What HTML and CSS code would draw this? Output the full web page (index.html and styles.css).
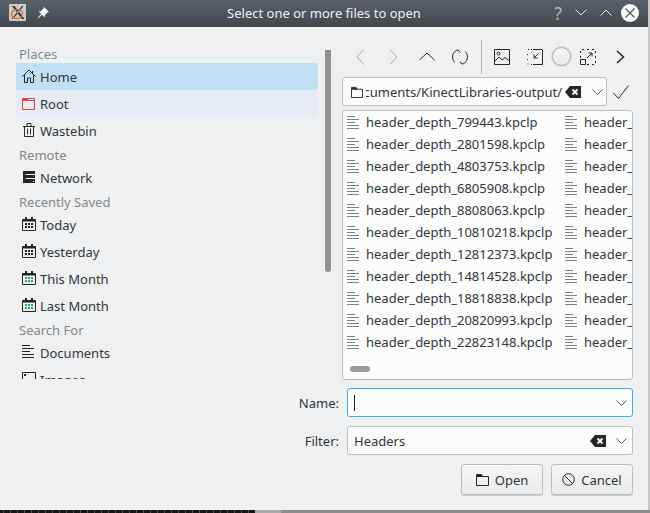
FILE: index.html
```html
<!DOCTYPE html>
<html>
<head>
    <title>Select one or more files to open</title>
    <link rel="stylesheet" href="styles.css">
</head>
<body>
    <svg class="sprites" width="0" height="0">
        <symbol id="doc" viewBox="0 0 13 13">
            <path d="M0 .5h8M0 3.500h12M0 6.500h8M0 9.500h12M0 12.500h12" fill="none" stroke="currentColor"/>
        </symbol>
        <symbol id="cal" viewBox="0 0 14 14">
            <path d="M.5 2.500h13v11H.5z" fill="none" stroke="#232629"/>
            <path d="M1 2h12v2.500H1zM3 0h2v2H3zM9 0h2v2H9z" fill="#232629"/>
        </symbol>
        <symbol id="folder" viewBox="0 0 13 13">
            <path d="M.5 1.500h5l1 2h6v9H.5z" fill="none" stroke="#232629"/>
            <path d="M1 2h5l1 2H1z" fill="#232629"/>
        </symbol>
        <symbol id="clear" viewBox="0 0 16 12">
            <path d="M5 0h11v12H5L0 6z" fill="#232629"/>
            <path d="M7.500 3.500l5 5M12.500 3.500l-5 5" stroke="#fcfcfc" stroke-width="2"/>
        </symbol>
        <symbol id="chevron" viewBox="0 0 11 6">
            <path d="M.5.500l5 5 5-5" fill="none" stroke="#4d5256"/>
        </symbol>
    </svg>

    <div class="window">
        <div class="titlebar">
            <div class="title-left">
                <svg class="x-logo" viewBox="0 0 17 17" width="17" height="17">
                    <rect width="17" height="17" rx="1" fill="#c9cbcc"/>
                    <path d="M3 2l10 13h2.500L5.500 2zM13 2h1.500L4 15H2.500z" fill="#2d3034"/>
                    <ellipse cx="8" cy="10" rx="5.500" ry="4.500" fill="none" stroke="#e2712c" stroke-width="1.400"/>
                </svg>
                <svg class="pin" viewBox="0 0 12 12" width="12" height="12">
                    <path d="M7 0l5 5-1.500.6-2.500 2.400-.4 2.300L5 7.800 1 11.500l-.5-.5L4.200 7 1.700 4.500 4 4.100l2.400-2.500z" fill="#fcfcfc"/>
                </svg>
            </div>
            <div class="title-text">Select one or more files to open</div>
            <div class="title-right">
                <span class="help">?</span>
                <svg viewBox="0 0 12 7" width="12" height="7"><path d="M.5.500L6 6l5.500-5.500" fill="none" stroke="#e3e5e6"/></svg>
                <svg viewBox="0 0 12 7" width="12" height="7"><path d="M.5 6.500L6 1l5.500 5.500" fill="none" stroke="#e3e5e6"/></svg>
                <svg class="close" viewBox="0 0 18 18" width="18" height="18">
                    <circle cx="9" cy="9" r="9" fill="#fcfcfc"/>
                    <path d="M4.500 4.500l9 9M13.500 4.500l-9 9" stroke="#555c63" stroke-width="1.300"/>
                </svg>
            </div>
        </div>

        <div class="content">
            <div class="top">
                <div class="places">
                    <div class="group">Places</div>
                    <div class="place selected">
                        <svg viewBox="0 0 14 14"><path d="M7 1L.5 7.500M7 1l6.500 6.500M2.500 6v7.500h3V9h3v4.500h3V6M10.500 2v2.500" fill="none" stroke="#232629"/></svg>
                        Home
                    </div>
                    <div class="place hover">
                        <svg viewBox="0 0 14 14"><path d="M.5 2.500h12v11H.5z" fill="none" stroke="#da4453"/><path d="M1 2h5v2h6.500v1H1z" fill="#da4453"/></svg>
                        Root
                    </div>
                    <div class="place">
                        <svg viewBox="0 0 14 14"><path d="M2.500 3.500v10h9v-10M1 3.500h12M5 3V.5h4V3M5.500 5.500v6M8.500 5.500v6" fill="none" stroke="#232629"/></svg>
                        Wastebin
                    </div>
                    <div class="group">Remote</div>
                    <div class="place">
                        <svg viewBox="0 0 14 14"><path d="M1 1h12v12H1z" fill="#232629"/><path d="M3.500 4.500H13M3.500 8.500H13" stroke="#eff0f1"/><path d="M11 11h1v1h-1z" fill="#eff0f1"/></svg>
                        Network
                    </div>
                    <div class="group">Recently Saved</div>
                    <div class="place">
                        <svg viewBox="0 0 14 14"><use href="#cal"/><path d="M3 6h8v2H3zM3 9h8v2H3z" fill="#232629"/><path d="M5.500 6v5M8.500 6v5" stroke="#eff0f1"/></svg>
                        Today
                    </div>
                    <div class="place">
                        <svg viewBox="0 0 14 14"><use href="#cal"/><path d="M3 6h8v2H3zM3 9h8v2H3z" fill="#232629"/><path d="M5.500 6v5M8.500 6v5" stroke="#eff0f1"/></svg>
                        Yesterday
                    </div>
                    <div class="place">
                        <svg viewBox="0 0 14 14"><use href="#cal"/><path d="M3 6h8v2H3zM3 9h8v2H3z" fill="#27ae60"/><path d="M5.500 6v5M8.500 6v5" stroke="#eff0f1"/></svg>
                        This Month
                    </div>
                    <div class="place">
                        <svg viewBox="0 0 14 14"><use href="#cal"/><path d="M3 6h8v2H3zM3 9h8v2H3z" fill="#27ae60"/><path d="M5.500 6v5M8.500 6v5" stroke="#eff0f1"/></svg>
                        Last Month
                    </div>
                    <div class="group">Search For</div>
                    <div class="place">
                        <svg class="ink"><use href="#doc"/></svg>
                        Documents
                    </div>
                    <div class="place">
                        <svg viewBox="0 0 14 14"><path d="M.5.500h13v13H.5z" fill="none" stroke="#232629"/><path d="M2 2h2v2H2z" fill="#232629"/></svg>
                        Images
                    </div>
                </div>

                <div class="splitter"><div class="splitter-thumb"></div></div>

                <div class="browser">
                    <div class="toolbar">
                        <button class="tool"><svg viewBox="0 0 9 16" width="9" height="16"><path d="M8 .5L1 8l7 7.500" fill="none" stroke="#a3a6a8"/></svg></button>
                        <button class="tool"><svg viewBox="0 0 9 16" width="9" height="16"><path d="M1 .5L8 8l-7 7.500" fill="none" stroke="#a3a6a8"/></svg></button>
                        <button class="tool"><svg viewBox="0 0 16 9" width="16" height="9"><path d="M.5 8L8 1l7.500 7" fill="none" stroke="#232629"/></svg></button>
                        <button class="tool"><svg viewBox="0 0 16 16" width="16" height="16"><path d="M6 .8A7.500 7.500 0 0 0 2.700 13.300M10 15.200A7.500 7.500 0 0 0 13.300 2.700M6 .8L8 3.500M10 15.200L8 12.500" fill="none" stroke="#232629"/></svg></button>
                        <div class="tool-sep"></div>
                        <button class="tool"><svg viewBox="0 0 16 16" width="16" height="16"><path d="M.5.500h15v15H.5z" fill="none" stroke="#232629"/><circle cx="4.500" cy="4.500" r="1.500" fill="none" stroke="#232629"/><path d="M1 12l4-4 3 3 3-2.500 4 3" fill="none" stroke="#232629"/></svg></button>
                        <button class="tool"><svg viewBox="0 0 16 16" width="16" height="16"><path d="M6 .5h9.500V15.500H6M1 .5h1M.5 5v1M.5 10v1M.5 15h1M4 15.500h1M4 .5h1" fill="none" stroke="#232629"/><path d="M11.500 4.500L7 9M7 5.500V9h3.500" fill="none" stroke="#232629"/></svg></button>
                        <div class="tool-circle"></div>
                        <button class="tool"><svg viewBox="0 0 16 16" width="16" height="16"><path d="M.5 9V.5H15.500V15.500H6" fill="none" stroke="#232629" stroke-dasharray="2 3"/><path d="M.5 10.500h5v5h-5z" fill="#eff0f1" stroke="#232629"/><path d="M7 9l5-5M8.500 4H12v3.500" fill="none" stroke="#232629"/></svg></button>
                        <button class="tool"><svg viewBox="0 0 9 14" width="9" height="14"><path d="M1 1l6.500 6L1 13" fill="none" stroke="#232629" stroke-width="1.500"/></svg></button>
                    </div>

                    <div class="path-row">
                        <div class="path-box">
                            <svg class="folder-icon"><use href="#folder"/></svg>
                            <span class="path-text"><span>/home/user/Documents/KinectLibraries-output/</span></span>
                            <svg class="clear-icon"><use href="#clear"/></svg>
                            <svg class="chevron"><use href="#chevron"/></svg>
                        </div>
                        <svg class="accept" viewBox="0 0 16 14" width="16" height="14"><path d="M.5 8l5 5.500L15.500.5" fill="none" stroke="#232629"/></svg>
                    </div>

                    <div class="files">
                        <div class="file-grid">
                            <div class="file"><svg><use href="#doc"/></svg>header_depth_799443.kpclp</div>
                            <div class="file"><svg><use href="#doc"/></svg>header_depth_24825303.kpclp</div>
                            <div class="file"><svg><use href="#doc"/></svg>header_depth_2801598.kpclp</div>
                            <div class="file"><svg><use href="#doc"/></svg>header_depth_26827458.kpclp</div>
                            <div class="file"><svg><use href="#doc"/></svg>header_depth_4803753.kpclp</div>
                            <div class="file"><svg><use href="#doc"/></svg>header_depth_28829613.kpclp</div>
                            <div class="file"><svg><use href="#doc"/></svg>header_depth_6805908.kpclp</div>
                            <div class="file"><svg><use href="#doc"/></svg>header_depth_30831768.kpclp</div>
                            <div class="file"><svg><use href="#doc"/></svg>header_depth_8808063.kpclp</div>
                            <div class="file"><svg><use href="#doc"/></svg>header_depth_32833923.kpclp</div>
                            <div class="file"><svg><use href="#doc"/></svg>header_depth_10810218.kpclp</div>
                            <div class="file"><svg><use href="#doc"/></svg>header_depth_34836078.kpclp</div>
                            <div class="file"><svg><use href="#doc"/></svg>header_depth_12812373.kpclp</div>
                            <div class="file"><svg><use href="#doc"/></svg>header_depth_36838233.kpclp</div>
                            <div class="file"><svg><use href="#doc"/></svg>header_depth_14814528.kpclp</div>
                            <div class="file"><svg><use href="#doc"/></svg>header_depth_38840388.kpclp</div>
                            <div class="file"><svg><use href="#doc"/></svg>header_depth_18818838.kpclp</div>
                            <div class="file"><svg><use href="#doc"/></svg>header_depth_40842543.kpclp</div>
                            <div class="file"><svg><use href="#doc"/></svg>header_depth_20820993.kpclp</div>
                            <div class="file"><svg><use href="#doc"/></svg>header_depth_42844698.kpclp</div>
                            <div class="file"><svg><use href="#doc"/></svg>header_depth_22823148.kpclp</div>
                            <div class="file"><svg><use href="#doc"/></svg>header_depth_44846853.kpclp</div>
                        </div>
                        <div class="hscroll"></div>
                    </div>
                </div>
            </div>

            <div class="form-row name-row">
                <label>Name:</label>
                <div class="field focused">
                    <span class="caret"></span>
                    <svg class="chevron"><use href="#chevron"/></svg>
                </div>
            </div>
            <div class="form-row filter-row">
                <label>Filter:</label>
                <div class="field">
                    <span class="field-text">Headers</span>
                    <svg class="clear-icon"><use href="#clear"/></svg>
                    <svg class="chevron"><use href="#chevron"/></svg>
                </div>
            </div>

            <div class="buttons">
                <button class="btn">
                    <svg><use href="#folder"/></svg>
                    Open
                </button>
                <button class="btn">
                    <svg viewBox="0 0 13 13"><circle cx="6.500" cy="6.500" r="5.800" fill="none" stroke="#232629"/><path d="M2.500 2.500l8 8" stroke="#232629"/></svg>
                    Cancel
                </button>
            </div>
        </div>
    </div>

    <div class="under">
        <div class="under-text"></div>
    </div>
</body>
</html>
```

FILE: styles.css
```css
* {
    box-sizing: border-box;
}

html, body {
    margin: 0;
    padding: 0;
    height: 513px;
    overflow: hidden;
}

body {
    background: #c4c6c8;
    font-family: "Noto Sans", sans-serif;
    font-size: 13px;
    color: #31363b;
}

.sprites {
    display: block;
    height: 0;
}

.window {
    width: 648px;
    height: 510px;
    background: #eff0f1;
}

/* title bar */
.titlebar {
    height: 27px;
    display: flex;
    align-items: center;
    justify-content: space-between;
    background: linear-gradient(#59626a, #40474d);
    color: #eff0f1;
    padding: 0 9px 2px 9px;
}

.title-left {
    display: flex;
    align-items: center;
    gap: 11px;
    width: 114px;
}

.title-text {
    flex: 1;
    text-align: center;
}

.title-right {
    width: 114px;
    display: flex;
    align-items: center;
    justify-content: flex-end;
    gap: 13px;
}

.help {
    font-size: 18px;
    color: #aeb2b5;
    line-height: 20px;
}

.close {
    margin-left: -4px;
}

/* main */
.content {
    height: 483px;
    padding: 15px 15px 0 16px;
}

.top {
    display: flex;
    height: 338px;
}

.places {
    width: 302px;
    height: 337px;
    padding-top: 1px;
    overflow: hidden;
    flex: none;
}

.group {
    height: 20px;
    line-height: 22px;
    padding-left: 3px;
    color: #84888b;
}

.place {
    height: 27px;
    display: flex;
    align-items: center;
    gap: 4px;
    padding-left: 6px;
}

.place svg {
    width: 14px;
    height: 14px;
    flex: none;
    margin-top: -2px;
}

.place .ink {
    width: 13px;
    height: 13px;
    margin-right: 1px;
    color: #232629;
}

.selected {
    background: #c2e0f5;
}

.hover {
    background: #e6ecf3;
}

.splitter {
    width: 6px;
    margin-left: 7px;
    flex: none;
}

.splitter-thumb {
    height: 222px;
    margin-top: 8px;
    background: #8f9193;
    border-radius: 0 0 3px 3px;
}

/* right side */
.browser {
    width: 291px;
    margin-left: 11px;
    flex: none;
}

.toolbar {
    display: flex;
    align-items: center;
    height: 35px;
    margin-top: -3px;
    padding-left: 2px;
}

.tool {
    width: 33px;
    height: 33px;
    padding: 0;
    background: none;
    border: none;
    display: flex;
    align-items: center;
    justify-content: center;
    flex: none;
}

.tool-sep {
    width: 1px;
    height: 34px;
    background: #b6b8ba;
    margin: 0 3px 0 5px;
    flex: none;
}

.tool-circle {
    width: 19px;
    height: 19px;
    border-radius: 50%;
    border: 1px solid #a9abad;
    background: linear-gradient(#f6f7f7, #e6e7e8);
    flex: none;
    margin-left: 1px;
    box-shadow: 0 0 0 1px #d8dadb;
}

.path-row {
    display: flex;
    align-items: center;
    margin-top: 3px;
    height: 29px;
}

.path-box {
    width: 265px;
    height: 29px;
    background: #fcfcfc;
    border: 1px solid #bcbebf;
    border-radius: 3px;
    display: flex;
    align-items: center;
    padding-left: 8px;
}

.folder-icon {
    width: 12px;
    height: 12px;
    flex: none;
}

.path-text {
    width: 196px;
    margin-left: 3px;
    overflow: hidden;
    white-space: nowrap;
    display: flex;
    justify-content: flex-end;
    flex: none;
}

.path-text span {
    flex: none;
}

.clear-icon {
    width: 16px;
    height: 12px;
    flex: none;
}

.path-box .clear-icon {
    margin-left: 3px;
}

.chevron {
    width: 11px;
    height: 6px;
    flex: none;
}

.path-box .chevron {
    margin-left: 11px;
}

.accept {
    margin-left: 6px;
}

.files {
    position: relative;
    height: 270px;
    margin-top: 4px;
    background: #fcfcfc;
    border: 1px solid #bcbebf;
    border-radius: 3px;
    overflow: hidden;
}

.file-grid {
    display: grid;
    grid-template-columns: repeat(2, 218px);
    grid-auto-rows: 22px;
    padding-left: 4px;
}

.file {
    display: flex;
    align-items: center;
    gap: 6px;
    white-space: nowrap;
}

.file svg {
    width: 13px;
    height: 13px;
    flex: none;
    color: #7a8087;
}

.hscroll {
    position: absolute;
    left: 7px;
    top: 255px;
    width: 20px;
    height: 6px;
    border-radius: 3px;
    background: #999b9d;
}

/* name and filter */
.form-row {
    display: flex;
    align-items: center;
}

.form-row label {
    width: 331px;
    text-align: right;
    padding-right: 8px;
}

.name-row {
    margin-top: 8px;
}

.filter-row {
    margin-top: 9px;
}

.field {
    width: 286px;
    height: 29px;
    background: #fcfcfc;
    border: 1px solid #bcbebf;
    border-radius: 3px;
    display: flex;
    align-items: center;
    padding: 0 5px 0 6px;
}

.focused {
    border-color: #3daee9;
}

.caret {
    width: 1px;
    height: 16px;
    background: #232629;
}

.field-text {
    flex: 1;
}

.field .chevron {
    margin-left: auto;
}

.field .clear-icon {
    margin-right: 10px;
}

.field-text + .clear-icon + .chevron {
    margin-left: 0;
}

.buttons {
    display: flex;
    justify-content: flex-end;
    gap: 8px;
    margin-top: 9px;
}

.btn {
    width: 82px;
    height: 31px;
    border: 1px solid #bcbebf;
    border-radius: 3px;
    background: linear-gradient(#f4f5f5, #e9eaeb);
    box-shadow: 0 1px 1px #c6c8c9;
    font: inherit;
    color: #31363b;
    display: flex;
    align-items: center;
    justify-content: center;
    gap: 6px;
    padding: 0;
}

.btn svg {
    width: 13px;
    height: 13px;
}

/* what shows behind the window */
.under {
    height: 3px;
    background: linear-gradient(90deg, #a8aaac 281px, #8a8c8e 281px);
}

.under-text {
    width: 255px;
    height: 3px;
    background: repeating-linear-gradient(90deg, #14161a 0 3px, #4a4e55 3px 4px, #14161a 4px 7px);
}
```
